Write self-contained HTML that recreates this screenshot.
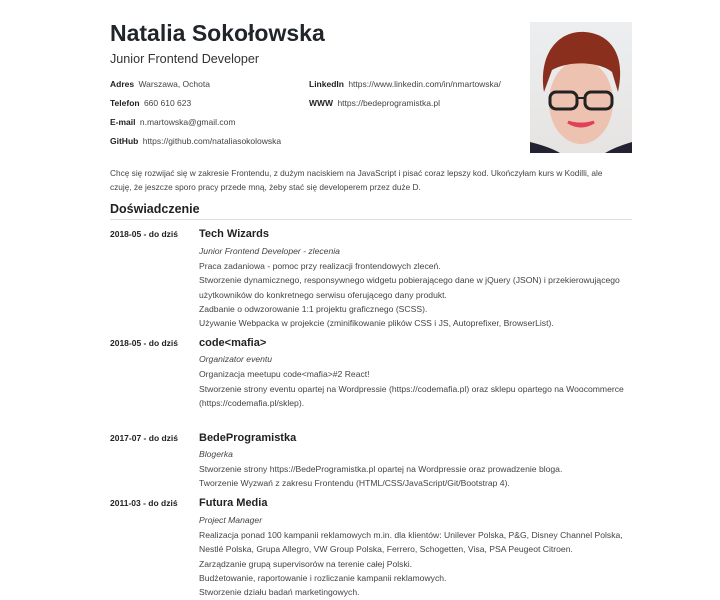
<!DOCTYPE html>
<html><head><meta charset="utf-8"><style>
body{margin:0;width:720px;height:600px;background:#fff;font-family:"Liberation Sans",sans-serif;color:#333;position:relative;overflow:hidden}
div{position:absolute;white-space:nowrap}
.n{left:110px;top:20px;font-size:23px;font-weight:bold;color:#212529}
.s{left:110px;top:52px;font-size:12.6px;color:#333}
.c{font-size:8.5px;color:#444;line-height:12px}
.c b{color:#222;margin-right:2px}
.t{font-size:8.3px;color:#444;line-height:12px}
.d{left:110px;font-size:8.5px;font-weight:bold;color:#222;line-height:12px}
.h{left:199px;font-size:11px;font-weight:bold;color:#222;line-height:14px}
.l{left:199px;font-size:8.6px;color:#444;line-height:12px}
i{color:#444}
.photo{left:530px;top:22px;width:102px;height:131px;background:linear-gradient(#eceef0,#e6e4e2);overflow:hidden}
</style></head><body>
<div class="n">Natalia Sokołowska</div>
<div class="s">Junior Frontend Developer</div>
<div class="c" style="left:110px;top:78px"><b>Adres</b> Warszawa, Ochota</div>
<div class="c" style="left:110px;top:97px"><b>Telefon</b> 660 610 623</div>
<div class="c" style="left:110px;top:116px"><b>E-mail</b> n.martowska@gmail.com</div>
<div class="c" style="left:110px;top:135px"><b>GitHub</b> https://github.com/nataliasokolowska</div>
<div class="c" style="left:309px;top:78px"><b>LinkedIn</b> https://www.linkedin.com/in/nmartowska/</div>
<div class="c" style="left:309px;top:97px"><b>WWW</b> https://bedeprogramistka.pl</div>
<div class="photo">
<svg width="102" height="131" viewBox="0 0 102 131">
<ellipse cx="51" cy="80" rx="32" ry="42" fill="#eec2b0"/>
<path d="M14 70 C8 30 30 8 55 10 C82 12 96 35 88 70 L82 50 C70 40 40 38 22 48 Z" fill="#8a2e1e"/>
<rect x="20" y="70" width="27" height="17" rx="6" fill="none" stroke="#222" stroke-width="3"/>
<rect x="55" y="70" width="27" height="17" rx="6" fill="none" stroke="#222" stroke-width="3"/>
<line x1="47" y1="76" x2="55" y2="76" stroke="#222" stroke-width="2"/>
<path d="M38 100 Q51 108 64 100 Q51 104 38 100" fill="#e0405a" stroke="#e0405a" stroke-width="3"/>
<path d="M0 131 L0 120 Q20 125 30 131 Z M102 131 L102 120 Q85 125 75 131Z" fill="#223"/>
</svg></div>
<div class="t" style="left:110px;top:167px">Chcę się rozwijać się w zakresie Frontendu, z dużym naciskiem na JavaScript i pisać coraz lepszy kod. Ukończyłam kurs w Kodilli, ale</div>
<div class="t" style="left:110px;top:181px">czuję, że jeszcze sporo pracy przede mną, żeby stać się developerem przez duże D.</div>
<div style="left:110px;top:202px;font-size:12.5px;font-weight:bold;color:#222">Doświadczenie</div>
<div style="left:110px;top:219px;width:522px;height:1px;background:#ddd"></div>

<div class="d" style="top:228px">2018-05 - do dziś</div>
<div class="h" style="top:227px">Tech Wizards</div>
<div class="l" style="top:245px"><i>Junior Frontend Developer - zlecenia</i></div>
<div class="l" style="top:260px">Praca zadaniowa - pomoc przy realizacji frontendowych zleceń.</div>
<div class="l" style="top:274px">Stworzenie dynamicznego, responsywnego widgetu pobierającego dane w jQuery (JSON) i przekierowującego</div>
<div class="l" style="top:289px">użytkowników do konkretnego serwisu oferującego dany produkt.</div>
<div class="l" style="top:303px">Zadbanie o odwzorowanie 1:1 projektu graficznego (SCSS).</div>
<div class="l" style="top:317px">Używanie Webpacka w projekcie (zminifikowanie plików CSS i JS, Autoprefixer, BrowserList).</div>

<div class="d" style="top:337px">2018-05 - do dziś</div>
<div class="h" style="top:336px">code&lt;mafia&gt;</div>
<div class="l" style="top:353px"><i>Organizator eventu</i></div>
<div class="l" style="top:368px">Organizacja meetupu code&lt;mafia&gt;#2 React!</div>
<div class="l" style="top:383px">Stworzenie strony eventu opartej na Wordpressie (https://codemafia.pl) oraz sklepu opartego na Woocommerce</div>
<div class="l" style="top:397px">(https://codemafia.pl/sklep).</div>

<div class="d" style="top:432px">2017-07 - do dziś</div>
<div class="h" style="top:431px">BedeProgramistka</div>
<div class="l" style="top:448px"><i>Blogerka</i></div>
<div class="l" style="top:463px">Stworzenie strony https://BedeProgramistka.pl opartej na Wordpressie oraz prowadzenie bloga.</div>
<div class="l" style="top:477px">Tworzenie Wyzwań z zakresu Frontendu (HTML/CSS/JavaScript/Git/Bootstrap 4).</div>

<div class="d" style="top:497px">2011-03 - do dziś</div>
<div class="h" style="top:496px">Futura Media</div>
<div class="l" style="top:514px"><i>Project Manager</i></div>
<div class="l" style="top:529px">Realizacja ponad 100 kampanii reklamowych m.in. dla klientów: Unilever Polska, P&amp;G, Disney Channel Polska,</div>
<div class="l" style="top:543px">Nestlé Polska, Grupa Allegro, VW Group Polska, Ferrero, Schogetten, Visa, PSA Peugeot Citroen.</div>
<div class="l" style="top:558px">Zarządzanie grupą supervisorów na terenie całej Polski.</div>
<div class="l" style="top:572px">Budżetowanie, raportowanie i rozliczanie kampanii reklamowych.</div>
<div class="l" style="top:586px">Stworzenie działu badań marketingowych.</div>
</body></html>
